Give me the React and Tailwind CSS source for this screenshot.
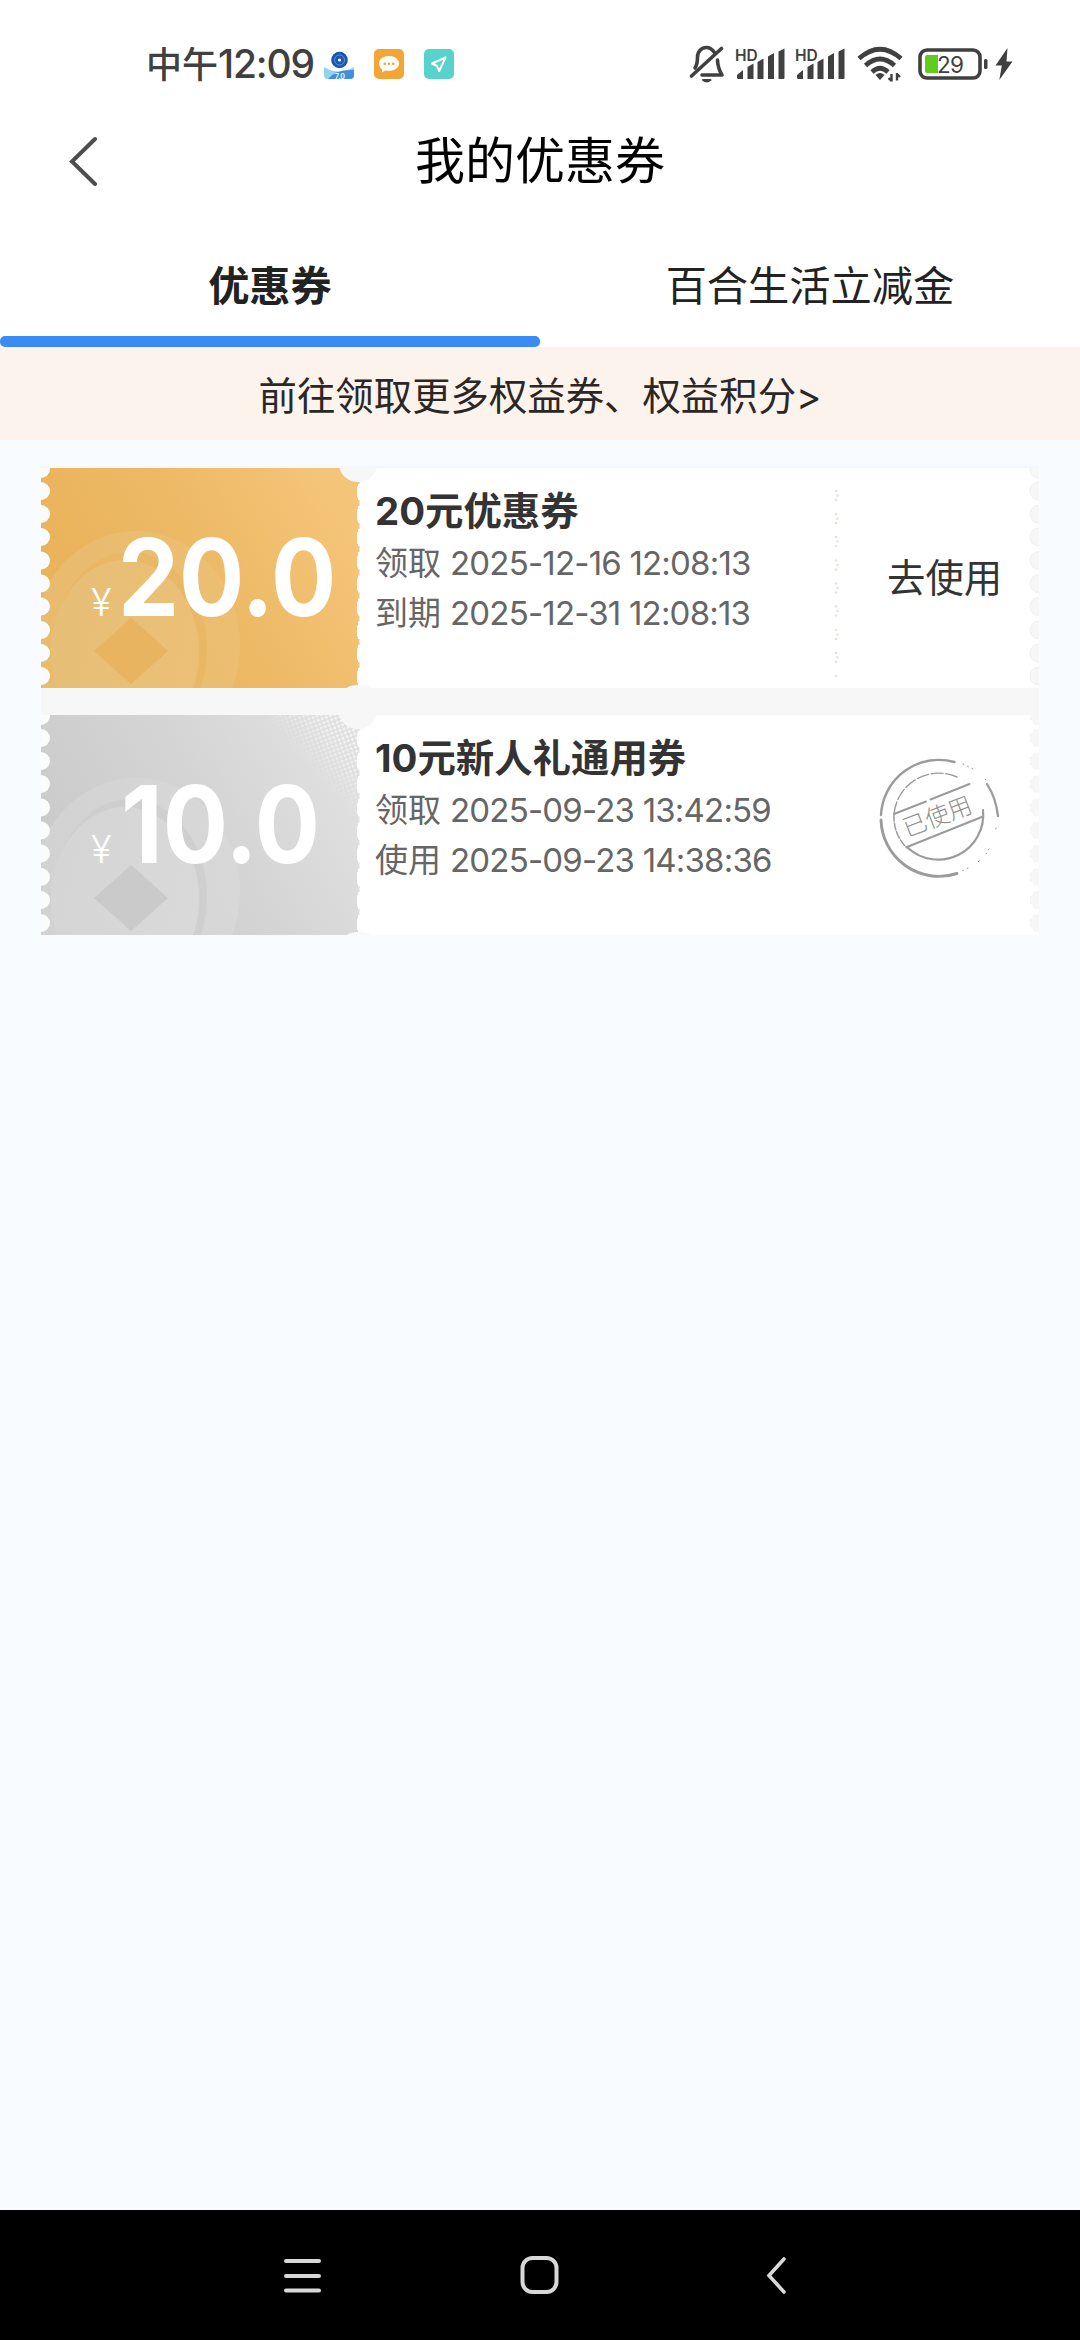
const COUPONS = [
  {
    id: 1,
    amount: '20.0',
    title: '20元优惠券',
    lines: [
      { label: '领取', time: '2025-12-16 12:08:13' },
      { label: '到期', time: '2025-12-31 12:08:13' },
    ],
    used: false,
  },
  {
    id: 2,
    amount: '10.0',
    title: '10元新人礼通用券',
    lines: [
      { label: '领取', time: '2025-09-23 13:42:59' },
      { label: '使用', time: '2025-09-23 14:38:36' },
    ],
    used: true,
  },
];

// y of every perforation along a ticket edge
const HOLES = [1, 23, 46, 69, 92.5, 115.5, 138.5, 162, 185, 208];

const GOLD = { from: '#e9b35a', mid: '#edb965', to: '#f4c478', coin: '#e7bf78', ring: '#e9b660', core: '#e8b45f' };
const GRAY = { from: '#cbcbcb', mid: '#d4d4d4', to: '#e0e0e0', coin: '#d6d6d6', ring: '#cbcbcb', core: '#cacaca' };

function Signal() {
  return (
    <svg className="overflow-visible" width="50" height="34" viewBox="0 0 50 34" fill="#404040">
      <text x="0" y="13.500" fontSize="15.500" fontWeight="600" fontFamily="Inter, sans-serif">HD</text>
      <path d="M2 28l6-5v9H3.500Q2 32 2 30.500zM12.500 20l6-3.500V32h-6zM22.500 15l6-3.500V32h-6zM33 9.500l6-3.500V32h-6zM43.500 4.500l6-3V31q0 1-1 1h-5z" />
    </svg>
  );
}

function StatusBar() {
  return (
    <div className="flex h-[106px] items-center pt-[22px] pr-[67px] pl-[146px] text-[#404040]">
      <div className="w-[178px] text-[36px] leading-[40px] font-medium whitespace-nowrap">
        中午<span className="text-[39px] tracking-[-1.2px]">12:09</span>
      </div>
      <div className="flex gap-5">
        <svg width="30" height="30" viewBox="0 0 30 30">
          <path d="M0 18q15 9 30 0v8q0 4-4 4H4q-4 0-4-4z" fill="#8fd4f3" />
          <path d="M4 30q8-10 26-9v5q0 4-4 4z" fill="#3f8fdc" />
          <circle cx="15.500" cy="11" r="8.300" fill="#1857b5" />
          <circle cx="15.500" cy="11" r="5" fill="none" stroke="#6fa5e0" strokeWidth="0.800" />
          <circle cx="15.500" cy="11" r="1.600" fill="#fff" />
          <text x="11" y="29.500" fontSize="7" fontWeight="600" fill="#fff" fontFamily="Inter, sans-serif">7.0</text>
        </svg>
        <svg width="30" height="30" viewBox="0 0 30 30">
          <rect width="30" height="30" rx="5" fill="#f3a536" />
          <path d="M15 7c5.500 0 10 3.200 10 7.400s-4.500 7.400-10 7.400c-1.500 0-2.600-.1-3.700-.4L8 23.500v-3.300C6 18.900 5 16.800 5 14.400 5 10.200 9.500 7 15 7z" fill="#fff" />
          <g fill="#f3a536">
            <circle cx="10.800" cy="14.800" r="1.300" />
            <circle cx="15" cy="14.800" r="1.300" />
            <circle cx="19.200" cy="14.800" r="1.300" />
          </g>
        </svg>
        <svg width="30" height="30" viewBox="0 0 30 30">
          <rect width="30" height="30" rx="5" fill="#57d2cd" />
          <path d="M21.500 8.500L8 14.500l5 2.500 2.200 5z" fill="none" stroke="#fff" strokeWidth="2" strokeLinejoin="round" />
        </svg>
      </div>
      <div className="ml-auto flex items-center">
        <svg width="36" height="38" viewBox="0 0 36 38" fill="none" stroke="#404040" strokeWidth="3.600" strokeLinecap="round" strokeLinejoin="round">
          <path d="M25.500 7.500C23 4 20.500 2.500 17.500 2.500 12.500 2.500 8.500 6.500 8.500 12c0 6-.5 8-2.500 11" />
          <path d="M28.500 15c.2 7 1.500 10 4.500 15H13" />
          <path d="M32.500 3.500L2.500 31" />
          <path d="M14 35q3.500 3 7.500 0z" strokeWidth="2" fill="#404040" />
        </svg>
        <div className="ml-[10px] flex gap-[10px]">
          <Signal />
          <Signal />
        </div>
        <svg className="ml-[12px]" width="48" height="36" viewBox="0 0 48 36" fill="none" stroke="#404040" strokeWidth="4.800">
          <path d="M2 12.500Q23 -6 44 12.500" />
          <path d="M8.500 19.500Q23 6.500 37.500 19.500" />
          <path d="M15 26Q23 18.500 31 26" />
          <path d="M18.500 29q4.500-4 9 0L23 34z" fill="#404040" stroke="none" />
          <path d="M34.500 28v7.500M40 27v7.500M34.500 35l-3-3M40 28l3 3" strokeWidth="2.400" />
        </svg>
        <svg className="ml-[13px]" width="71" height="32" viewBox="0 0 71 32">
          <rect x="2" y="2" width="60" height="28" rx="7" fill="none" stroke="#404040" strokeWidth="3.600" />
          <path d="M9 7h11v18H9q-2 0-2-2V9q0-2 2-2z" fill="#62cb1f" />
          <rect x="66" y="11" width="3.500" height="10" rx="1.500" fill="#404040" />
          <text x="19" y="24.500" fontSize="22.500" fill="#404040" letterSpacing="-.6" fontFamily="Inter, sans-serif">29</text>
        </svg>
        <svg className="ml-[6px]" width="18" height="32" viewBox="0 0 18 32" fill="#404040">
          <path d="M12.500 0L.5 17.500h6.300L4.300 32 17.500 13.500h-6z" />
        </svg>
      </div>
    </div>
  );
}

function Header() {
  return (
    <div className="grid h-[110px] grid-cols-[1fr_auto_1fr] items-center px-[68px]">
      <svg width="30" height="50" viewBox="0 0 30 50" fill="none" stroke="#4d4d4d" strokeWidth="4" strokeLinecap="round">
        <path d="M27 3L4 25.500 27 48" />
      </svg>
      <h1 className="text-[50px] leading-[60px] text-black">我的优惠券</h1>
      <span />
    </div>
  );
}

function Tabs() {
  return (
    <div className="flex h-[131px] text-[41.25px] leading-[60px] text-[#222]">
      <div className="flex w-1/2 flex-col justify-end">
        <div className="pb-[20px] text-center font-bold">优惠券</div>
        <div className="h-[11px] rounded-[5px] bg-[#3a8bf3]" />
      </div>
      <div className="flex w-1/2 flex-col justify-end pb-[31px] text-center">百合生活立减金</div>
    </div>
  );
}

function TicketFace({ used }) {
  const c = used ? GRAY : GOLD;
  const id = used ? 'gray' : 'gold';
  return (
    <svg className="absolute inset-0" width="998" height="220" viewBox="0 0 998 220">
      <defs>
        <linearGradient id={`face-${id}`} gradientUnits="userSpaceOnUse" x1="40" y1="170" x2="290" y2="30">
          <stop offset="0" stopColor={c.from} />
          <stop offset="0.500" stopColor={c.mid} />
          <stop offset="1" stopColor={c.to} />
        </linearGradient>
        <linearGradient id={`coin-${id}`} x1="0" y1="0" x2="1" y2="0.300">
          <stop offset="0.200" stopColor={c.coin} />
          <stop offset="1" stopColor={used ? '#dadada' : '#ecc178'} />
        </linearGradient>
        <pattern id="grain" width="6" height="6" patternUnits="userSpaceOnUse" patternTransform="rotate(25)">
          <circle cx="1.500" cy="1.500" r="1.200" fill="#fff" />
          <circle cx="4.500" cy="4.500" r="1.200" fill="#fff" />
        </pattern>
        <linearGradient id="grain-fade" gradientUnits="userSpaceOnUse" x1="262" y1="48" x2="300" y2="14">
          <stop offset="0" stopColor="#000" />
          <stop offset="1" stopColor="#ddd" />
        </linearGradient>
        <mask id="grain-mask">
          <rect width="318" height="220" fill="url(#grain-fade)" />
        </mask>
      </defs>
      <rect width="998" height="220" fill="#fff" />
      <rect width="317" height="220" fill={`url(#face-${id})`} />
      {used && <rect width="317" height="220" fill="url(#grain)" mask="url(#grain-mask)" />}

      <ellipse cx="95" cy="177" rx="104" ry="114" fill={`url(#coin-${id})`} opacity="0.650" />
      <ellipse cx="89" cy="182" rx="77" ry="98" fill={c.ring} opacity="0.650" />
      <ellipse cx="84" cy="184" rx="74" ry="92" fill={`url(#coin-${id})`} opacity="0.900" />
      <path d="M90 150l37 33-37 33-37-33z" fill={c.core} />

      {HOLES.map((y) => (
        <g key={y}>
          <circle cx="0" cy={y} r="9" fill="#fbfbfb" />
          <circle cx="998" cy={y} r="9" fill="#f7f7f7" stroke="#efefef" strokeWidth="1" strokeDasharray={used ? '2 4' : undefined} />
          <rect x="316" y={y - 5} width="3" height="12" rx="1" fill="#fff" />
          <rect x="317" y={y + 9} width="1.500" height="6" fill={c.to} />
        </g>
      ))}
      <ellipse cx="317" cy="-4" rx="19" ry="18" fill="#f7f7f7" />
      <ellipse cx="318" cy="220" rx="12" ry="3" fill="#fbf9f5" />

      {!used &&
        HOLES.slice(1).map((y) => (
          <g key={y} fill="#e6e3d6">
            <circle cx="795" cy={y} r="1.300" />
            {y < 208 && <circle cx="796.500" cy={y + 4.500} r="1.300" />}
            {y < 208 && <circle cx="795" cy={y + 9} r="1.300" />}
          </g>
        ))}
    </svg>
  );
}

function UsedStamp() {
  return (
    <svg width="124" height="124" viewBox="-62 -62 124 124" fill="none" stroke="#9b9b9b" strokeLinecap="round">
      <path d="M15.500 -56A58 58 0 0 0 -58 -3" strokeWidth="2.400" />
      <path d="M-58 2A58 58 0 0 0 18 55.500" strokeWidth="2.900" />
      <path d="M48 -34Q57 -20 59 -2" strokeWidth="2.300" />
      <path d="M24 -54l12 6M46 -39l3 3M57 10l-1 3M50 31l-3 5M40 43l-3 3M29 50l-6 3" strokeWidth="1" strokeDasharray="1 4" />
      <path d="M18 -41A45 45 0 0 0 -45 -4" strokeWidth="1.400" strokeDasharray="12 2.500" />
      <path d="M-45 -4Q-46 16 -32 30" strokeWidth="1.500" strokeDasharray="7 2" />
      <path d="M-31 30A45 45 0 0 0 44 -8" strokeWidth="2.200" />
      <path d="M-45 -4L-13 -16.500M-8.500 -18.500L30.500 -34M-32 29L44 -1.500" strokeWidth="2" />
      <text x="-1" y="6.500" transform="rotate(-21)" textAnchor="middle" fontSize="24" fontWeight="300" fill="#8f8f8f" stroke="none" fontFamily="'Noto Sans CJK SC', sans-serif">已使用</text>
    </svg>
  );
}

function Coupon({ coupon }) {
  return (
    <div className="relative h-[220px] w-[998px] overflow-hidden">
      <TicketFace used={coupon.used} />
      <div className="relative flex h-full">
        <div className="flex w-[318px] items-baseline pt-[46px] pl-[50px] text-white">
          <span className="w-[30px] text-[38px] leading-none font-light">¥</span>
          <span className="origin-left scale-x-[0.905] text-[107px] leading-[126px] font-bold">{coupon.amount}</span>
        </div>
        <div className="w-[490px] pt-[17px] pl-4">
          <h2 className="h-[53px] text-[38.4px] leading-[52px] font-bold text-[#333]">{coupon.title}</h2>
          {coupon.lines.map((line) => (
            <p key={line.label} className="flex h-[50px] items-center gap-[9px] text-[33px] leading-[50px] text-[#666]">
              <span>{line.label}</span>
              <span className="tracking-[-0.8px]">{line.time}</span>
            </p>
          ))}
        </div>
        {coupon.used ? (
          <div className="pt-[41px] pl-[28px]">
            <UsedStamp />
          </div>
        ) : (
          <div className="flex items-center pl-[38px] text-[38.4px] leading-none text-[#333]">去使用</div>
        )}
      </div>
    </div>
  );
}

function NavBar() {
  return (
    <div className="flex h-[130px] items-center bg-black pl-[283px]">
      <svg width="40" height="40" viewBox="0 0 40 40" stroke="#d8d8d8" strokeWidth="4" strokeLinecap="round">
        <path d="M3 6h33M3 21h33M3 35.500h33" />
      </svg>
      <svg className="ml-[196px]" width="40" height="40" viewBox="0 0 40 40" fill="none" stroke="#d8d8d8" strokeWidth="4">
        <rect x="3.500" y="3" width="34" height="34" rx="10" />
      </svg>
      <svg className="ml-[206px]" width="24" height="40" viewBox="0 0 24 40" fill="none" stroke="#d8d8d8" strokeWidth="3.600" strokeLinecap="round">
        <path d="M19 4L4 20.500l15 16.500" />
      </svg>
    </div>
  );
}

export default function App() {
  return (
    <div className="flex h-[2340px] w-[1080px] flex-col bg-[#f8fbff] font-['Inter','Noto_Sans_CJK_SC',sans-serif]">
      <div className="bg-white">
        <StatusBar />
        <Header />
        <Tabs />
      </div>
      <div className="h-[93px] bg-[#fdf3ed] text-center text-[38.4px] leading-[99px] text-[#2b2725]">
        前往领取更多权益券、权益积分&gt;
      </div>
      <div className="mx-[41px] mt-[26px] flex flex-col gap-[27px] border-t-2 border-[#f5f8fa] bg-[#f7f7f7]">
        {COUPONS.map((coupon) => (
          <Coupon key={coupon.id} coupon={coupon} />
        ))}
      </div>
      <div className="mt-auto">
        <NavBar />
      </div>
    </div>
  );
}
